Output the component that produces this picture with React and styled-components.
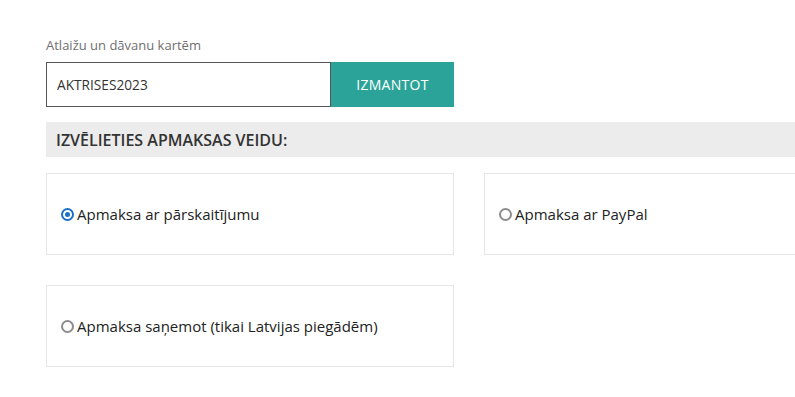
import React, { useState } from 'react';
import styled, { createGlobalStyle } from 'styled-components';

const GlobalStyle = createGlobalStyle`
  body {
    margin: 0;
    background: #fff;
    font-family: 'Open Sans', 'Liberation Sans', sans-serif;
    overflow: hidden;
  }
`;

const Page = styled.div`
  width: 900px;
  padding: 36px 0 0 46px;
`;

const Label = styled.div`
  font-size: 13px;
  color: #6f6f6f;
  line-height: 18px;
  margin-bottom: 8px;
`;

const CouponRow = styled.div`
  display: flex;
  width: 408px;
  height: 45px;
  margin-bottom: 15px;
`;

const CouponInput = styled.input`
  flex: 1;
  box-sizing: border-box;
  height: 100%;
  border: 1px solid #555;
  padding: 0 10px;
  font-family: inherit;
  font-size: 13.7px;
  color: #333;
  outline: none;
`;

const ApplyButton = styled.button`
  width: 123px;
  height: 100%;
  border: none;
  background: #2ba398;
  color: #fff;
  font-family: inherit;
  font-size: 14px;
  letter-spacing: 0.3px;
`;

const SectionHeader = styled.h3`
  margin: 0 0 16px;
  height: 35px;
  display: flex;
  align-items: center;
  padding-left: 10px;
  background: #ececec;
  font-size: 16px;
  font-weight: 600;
  color: #333;
`;

const Options = styled.div`
  display: grid;
  grid-template-columns: 408px 408px;
  column-gap: 30px;
  row-gap: 30px;
`;

const OptionCard = styled.label`
  box-sizing: border-box;
  height: 82px;
  border: 1px solid #e6e6e6;
  display: flex;
  align-items: center;
  padding-left: 14px;
  font-size: 15px;
  color: #222;
  cursor: pointer;
`;

const Radio = styled.span`
  box-sizing: border-box;
  width: 13px;
  height: 13px;
  border-radius: 50%;
  border: 2px solid ${({ $checked }) => ($checked ? '#1a6fc9' : '#8c8c8c')};
  margin-right: 3px;
  margin-top: 1px;
  display: flex;
  align-items: center;
  justify-content: center;

  &::after {
    content: '';
    width: 5px;
    height: 5px;
    border-radius: 50%;
    background: #1a6fc9;
    display: ${({ $checked }) => ($checked ? 'block' : 'none')};
  }
`;

const methods = [
  'Apmaksa ar pārskaitījumu',
  'Apmaksa ar PayPal',
  'Apmaksa saņemot (tikai Latvijas piegādēm)',
];

const App = () => {
  const [selected, setSelected] = useState(0);

  return (
    <Page>
      <GlobalStyle />
      <Label>Atlaižu un dāvanu kartēm</Label>
      <CouponRow>
        <CouponInput defaultValue="AKTRISES2023" />
        <ApplyButton>IZMANTOT</ApplyButton>
      </CouponRow>
      <SectionHeader>IZVĒLIETIES APMAKSAS VEIDU:</SectionHeader>
      <Options>
        {methods.map((m, i) => (
          <OptionCard key={m} onClick={() => setSelected(i)}>
            <Radio $checked={selected === i} />
            {m}
          </OptionCard>
        ))}
      </Options>
    </Page>
  );
};

export default App;
